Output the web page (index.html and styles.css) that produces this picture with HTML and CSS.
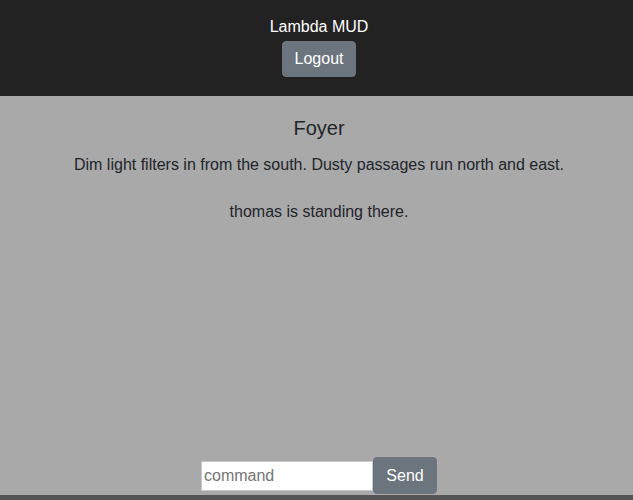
FILE: index.html
```html
<!DOCTYPE html>
<html>
<head>
<meta charset="utf-8">
<link rel="stylesheet" href="styles.css">
</head>
<body>
<div class="app">
  <header class="header">
    <div class="brand">Lambda MUD</div>
    <button class="btn logout">Logout</button>
  </header>
  <main class="room">
    <h2 class="room-title">Foyer</h2>
    <p class="room-desc">Dim light filters in from the south. Dusty passages run north and east.</p>
    <p class="room-players">thomas is standing there.</p>
    <form class="cmd-form">
      <input class="cmd-input" type="text" placeholder="command">
      <button class="btn send" type="button">Send</button>
    </form>
  </main>
  <div class="footer-strip"></div>
</div>
</body>
</html>
```
FILE: styles.css
```css
* { box-sizing: border-box; }
html, body { margin: 0; padding: 0; }
body {
  font-family: "Liberation Sans", Arial, sans-serif;
  font-size: 16px;
  color: #212529;
  background: #a9a9a9;
}
.app {
  display: flex;
  flex-direction: column;
  height: 500px;
}
.header {
  background: #222222;
  height: 96px;
  display: flex;
  flex-direction: column;
  align-items: center;
  padding-top: 17px;
  padding-left: 5px;
}
.brand {
  color: #ffffff;
  font-size: 16px;
  line-height: 20px;
}
.btn {
  font-family: "Liberation Sans", Arial, sans-serif;
  font-size: 16px;
  line-height: 24px;
  color: #ffffff;
  background: #6c757d;
  border: 1px solid #6c757d;
  border-radius: 4px;
  padding: 5px 12px;
}
.logout {
  margin-top: 4px;
}
.room {
  flex: 1;
  display: flex;
  flex-direction: column;
  align-items: center;
  padding-top: 20px;
  padding-left: 5px;
  text-align: center;
}
.room-title {
  margin: 0;
  font-size: 20px;
  line-height: 24px;
  font-weight: 400;
}
.room-desc {
  margin: 13px 0 0;
  line-height: 24px;
}
.room-players {
  margin: 23px 0 0;
  line-height: 24px;
}
.cmd-form {
  margin-top: auto;
  margin-bottom: 1px;
  display: flex;
  align-items: center;
}
.cmd-input {
  width: 172px;
  height: 30px;
  font-family: "Liberation Sans", Arial, sans-serif;
  font-size: 16px;
  padding: 1px 2px;
  border: 1px solid #c8c8c8;
  background: #fff;
}
.cmd-input::placeholder { color: #757575; }
.send {
  height: 37px;
  width: 64px;
  padding: 0;
  font-weight: 500;
}
.footer-strip {
  height: 5px;
  background: #555555;
}
```
